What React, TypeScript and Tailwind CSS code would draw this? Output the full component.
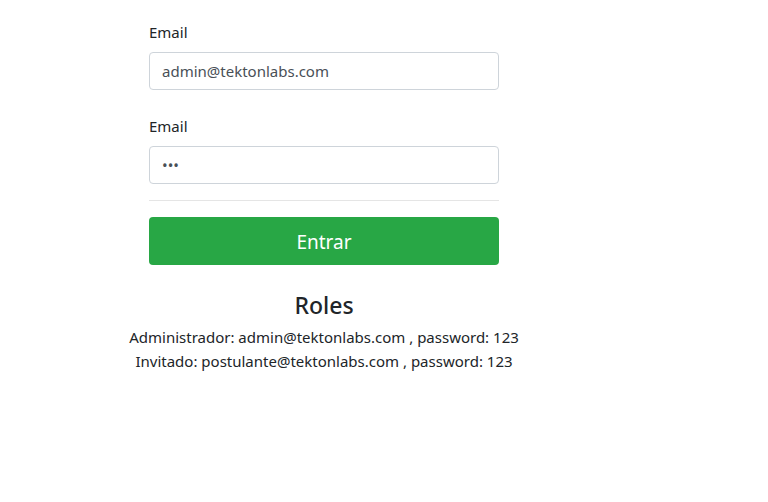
import React from "react";

export default function App() {
  const font = { fontFamily: '"Noto Sans", "Open Sans", sans-serif' };
  return (
    <div className="min-h-[502px] w-[768px] bg-white text-[#212529]" style={font}>
      <div className="ml-[149px] w-[350px] pt-[20px]">
        <form onSubmit={(e) => e.preventDefault()}>
          <div className="mb-[24px]">
            <label className="mb-[8px] block text-[15px] leading-[24px]">Email</label>
            <input
              type="email"
              defaultValue="admin@tektonlabs.com"
              className="block h-[38px] w-full rounded-[4px] border border-[#ced4da] px-[12px] text-[15px] text-[#495057] outline-none"
            />
          </div>
          <div>
            <label className="mb-[8px] block text-[15px] leading-[24px]">Email</label>
            <input
              type="password"
              defaultValue="123"
              className="block h-[38px] w-full rounded-[4px] border border-[#ced4da] px-[12px] text-[15px] text-[#495057] outline-none"
            />
          </div>
          <hr className="my-[16px] border-t border-[#e5e5e5]" />
          <button
            type="submit"
            className="block h-[48px] w-full rounded-[4px] bg-[#28a745] pt-[2px] text-[19px] text-white"
          >
            Entrar
          </button>
        </form>
        <div className="mt-[26px] text-center">
          <h3 className="text-[23px] font-medium leading-[29px]">Roles</h3>
          <p className="mx-[-40px] mt-[5px] whitespace-nowrap text-[15px] leading-[24px]">
            Administrador: admin@tektonlabs.com , password: 123
          </p>
          <p className="mx-[-40px] whitespace-nowrap text-[15px] leading-[24px]">
            Invitado: postulante@tektonlabs.com , password: 123
          </p>
        </div>
      </div>
    </div>
  );
}
